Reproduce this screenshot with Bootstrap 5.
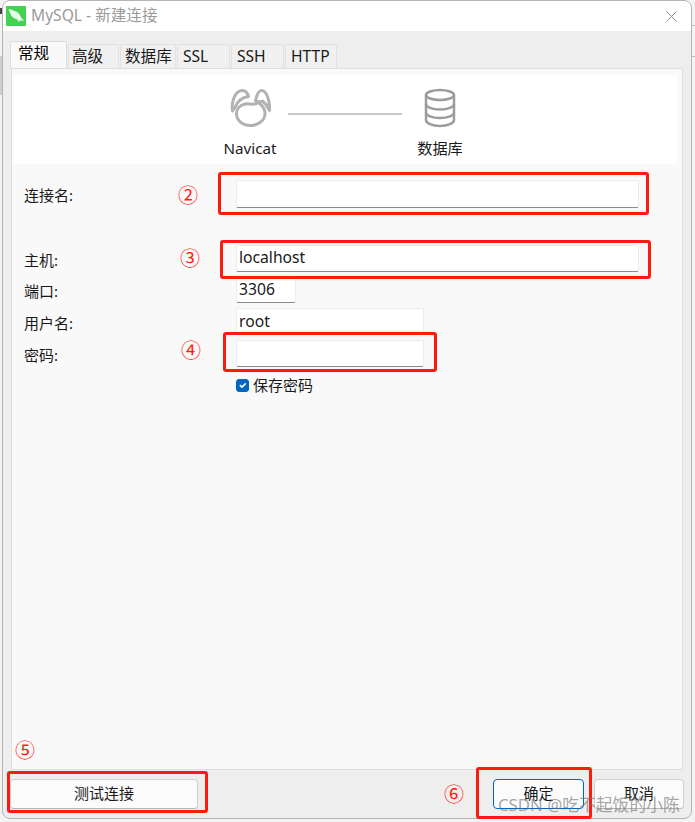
<!DOCTYPE html>
<html lang="zh-CN">
<head>
    <meta charset="UTF-8">
    <meta name="viewport" content="width=device-width, initial-scale=1.0">
    <title>MySQL - 新建连接</title>
    <link href="https://cdn.jsdelivr.net/npm/bootstrap@5.3.0/dist/css/bootstrap.min.css" rel="stylesheet">
    <script src="https://cdn.jsdelivr.net/npm/bootstrap@5.3.0/dist/js/bootstrap.bundle.min.js"></script>
    <style>
        html, body { height: 822px; overflow: hidden; }
        body {
            position: relative;
            background: #f3f3f3;
            font-family: "Noto Sans", "Noto Sans CJK SC", sans-serif;
            font-size: 15px;
            color: #1a1a1a;
        }
        .win {
            width: 690px;
            height: 819px;
            margin-left: 2px;
            background: #eeeeee;
            border: 1px solid #b4b4b4;
            border-radius: 8px;
            overflow: hidden;
            position: relative;
            z-index: 1;
        }
        .win-title {
            height: 30px;
            background: #fff;
            padding: 0 14px 0 3px;
            color: #9a9a9a;
            font-size: 15.6px;
        }
        .win-title svg.logo { margin-right: 5px; }
        .tab-strip { padding: 10px 8px 0 7px; }
        .tab-strip .nav-tabs { border: 0; height: 27px; gap: 1px; align-items: flex-end; }
        .tab-strip .nav-link {
            height: 25px;
            padding: 0 0 0 5px;
            display: flex;
            align-items: center;
            color: #1a1a1a;
            font-size: 15.6px;
            background: #f0f0f0;
            border: 1px solid #e2e2e2;
            border-bottom: 0;
            border-radius: 2px 2px 0 0;
            margin: 0;
        }
        .tab-strip .nav-link.active { height: 28px; background: #f9f9f9; border-color: #dcdcdc; padding-bottom: 3px; padding-left: 7px; }
        .tab-tight { padding-left: 3px !important; }
        .tab-db { padding-left: 4px !important; }
        .panel-main {
            margin: 0 8px 0 8px;
            height: 702px;
            background: #f9f9f9;
            border: 1px solid #dedede;
            padding: 6px 5px 0 1px;
        }
        .banner { height: 89px; background: #fff; margin-bottom: 16px; padding-top: 6px; }
        .step-item { width: 70px; }
        .step-item span { font-size: 15.200px; line-height: 20px; margin-top: 10px; }
        .step-line { width: 114px; height: 2px; background: #c8c8c8; margin: 0 3px; transform: translateY(-9px); }
        .field-row { height: 27px; margin-bottom: 5px; padding-left: 11px; }
        .field-row > label { width: 212px; flex: none; margin: 0; padding-top: 3px; }
        .field-row .form-control {
            height: 100%;
            border: 1px solid #ececec;
            border-bottom: 1px solid #8a8a8a;
            border-radius: 2px;
            padding: 0 2px 2px;
            font-size: 15.7px;
            color: #1a1a1a;
            background: #fff;
            box-shadow: none;
        }
        .row-host .form-control { padding-bottom: 4px; }
        .w-name { width: 403px; }
        .w-port { width: 60px; }
        .w-user { width: 188px; }
        .row-first { height: 28px; margin-bottom: 37px; }
        .row-first > label { padding-top: 2px; }
        .row-host { margin-bottom: 4px; }
        .save-row { padding-left: 223px; margin-top: 7px; font-size: 15px; }
        .save-row .form-check-input {
            width: 13px;
            height: 13px;
            margin: 0 4px 0 0;
            border-radius: 3px;
            background-color: #0067c0;
            border-color: #0067c0;
        }
        .win-foot { padding: 9px 7px 0 7px; }
        .foot-btn {
            height: 30px;
            padding: 0 0 2px;
            background: #fbfbfb;
            border: 1px solid #cfcfcf;
            border-bottom-color: #b5b5b5;
            border-radius: 4px;
            font-size: 15px;
            color: #1a1a1a;
        }
        .foot-test { width: 188px; }
        .foot-ok { width: 91px; margin-left: auto; margin-right: 10px; border: 1px solid #0067c0; }
        .foot-cancel { width: 90px; }
        .mark-box { position: absolute; z-index: 2; border: 3px solid #ff1a10; border-radius: 3px; pointer-events: none; }
        .mark-num { position: absolute; z-index: 2; color: #ff1a10; font-size: 20px; line-height: 20px; transform: translate(-50%, -50%); font-family: "Noto Sans CJK SC", sans-serif; }
        .wm-text {
            position: absolute;
            z-index: 2;
            left: 498px;
            top: 794px;
            font-size: 16.800px;
            line-height: 22px;
            color: rgba(110, 110, 110, .62);
            white-space: nowrap;
        }
        /* 窗口背后露出的部分 */
        .back-bit { position: absolute; left: 0; width: 2px; }
        .back-a { top: 8px; height: 6px; background: #444; }
        .back-b { top: 56px; height: 39px; background: #cfcfcf; }
        .back-line { position: absolute; left: 692px; width: 3px; height: 1px; background: #bdbdbd; }
    </style>
</head>
<body>
    <div class="back-bit back-a"></div>
    <div class="back-bit back-b"></div>
    <div class="back-line" style="top:25px"></div>
    <div class="back-line" style="top:56px"></div>

    <div class="win d-flex flex-column">
        <!-- 标题栏 -->
        <div class="win-title d-flex align-items-center flex-none">
            <svg class="logo" width="20" height="20" viewBox="0 0 20 20">
                <rect width="20" height="20" fill="#43d252"/>
                <path d="M2.500 3.500c2.500-.5 4 .5 5.500 1.500 3 .5 5 2 6 4.500 1 2 2.500 3.500 4 5.500-1.500-.5-2.500-.5-4-.5l-1.500 1.500-1-2.500C8.500 13 5.500 11 4.500 8 4 6.500 3 5 2.500 3.500z" fill="#e9fbe9"/>
            </svg>
            <span>MySQL - 新建连接</span>
            <svg class="ms-auto" width="11" height="11" viewBox="0 0 11 11" stroke="#8c8c8c" stroke-width="1">
                <path d="M.5.5l10 10M10.500.5l-10 10"/>
            </svg>
        </div>

        <!-- 标签页 -->
        <div class="tab-strip">
            <ul class="nav nav-tabs">
                <li class="nav-item"><a class="nav-link active" style="width:57px" href="#">常规</a></li>
                <li class="nav-item"><a class="nav-link tab-tight" style="width:51px" href="#">高级</a></li>
                <li class="nav-item"><a class="nav-link tab-db" style="width:56px" href="#">数据库</a></li>
                <li class="nav-item"><a class="nav-link" style="width:53px" href="#">SSL</a></li>
                <li class="nav-item"><a class="nav-link" style="width:53px" href="#">SSH</a></li>
                <li class="nav-item"><a class="nav-link" style="width:52px" href="#">HTTP</a></li>
            </ul>
        </div>

        <div class="panel-main">
            <div class="banner d-flex justify-content-center align-items-center">
                <div class="step-item d-flex flex-column align-items-center">
                    <svg width="42" height="40" viewBox="0 0 42 40" fill="none" stroke="#b2b2b2" stroke-width="3" stroke-linecap="round" stroke-linejoin="round">
                        <path d="M3.500 23C2 12 7 2.500 13.500 2.500c3 0 5 2.500 6 6-6 1-11 5-13 10z"/>
                        <path d="M26.500 13c1-5 3-10.500 6-10.500 5 0 8.500 10 8 20-1.500-3.500-4-7-7-9.500-2 1-4 1-7 0z"/>
                        <path d="M7.500 25c-.5 7 6 12.500 13.500 12.500S36 33 36 25.500c0-4-3-8.500-7-11-2.500 2-5 2-8 1.500-6-1-13 2-13.500 9z"/>
                    </svg>
                    <span>Navicat</span>
                </div>
                <div class="step-line"></div>
                <div class="step-item d-flex flex-column align-items-center">
                    <svg width="32" height="40" viewBox="0 0 32 40" fill="none" stroke="#9c9c9c" stroke-width="2.500">
                        <ellipse cx="16" cy="7" rx="14" ry="5"/>
                        <path d="M2 7v25c0 3 6 6 14 6s14-3 14-6V7"/>
                        <path d="M2 16c0 3 6 5.500 14 5.500S30 19 30 16"/>
                        <path d="M2 24.500c0 3 6 5.500 14 5.500s14-2.500 14-5.500"/>
                    </svg>
                    <span>数据库</span>
                </div>
            </div>

            <div class="field-row row-first d-flex align-items-center">
                <label for="connName">连接名:</label>
                <input id="connName" class="form-control w-name" type="text">
            </div>
            <div class="field-row row-host d-flex align-items-center">
                <label for="hostName">主机:</label>
                <input id="hostName" class="form-control w-name" type="text" value="localhost">
            </div>
            <div class="field-row d-flex align-items-center">
                <label for="portNo">端口:</label>
                <input id="portNo" class="form-control w-port" type="text" value="3306">
            </div>
            <div class="field-row d-flex align-items-center">
                <label for="userName">用户名:</label>
                <input id="userName" class="form-control w-user" type="text" value="root">
            </div>
            <div class="field-row d-flex align-items-center">
                <label for="passWord">密码:</label>
                <input id="passWord" class="form-control w-user" type="text">
            </div>
            <div class="save-row d-flex align-items-center">
                <input id="savePwd" class="form-check-input" type="checkbox" checked>
                <label for="savePwd">保存密码</label>
            </div>
        </div>

        <div class="win-foot d-flex">
            <button class="btn foot-btn foot-test" type="button">测试连接</button>
            <button class="btn foot-btn foot-ok" type="button">确定</button>
            <button class="btn foot-btn foot-cancel" type="button">取消</button>
        </div>
    </div>

    <!-- 红色标注 -->
    <div class="mark-box" style="left:218px;top:172px;width:431px;height:43px"></div>
    <div class="mark-box" style="left:220px;top:240px;width:431px;height:39px"></div>
    <div class="mark-box" style="left:223px;top:332px;width:214px;height:40px"></div>
    <div class="mark-box" style="left:7px;top:771px;width:201px;height:42px"></div>
    <div class="mark-box" style="left:476px;top:767px;width:116px;height:52px"></div>
    <span class="mark-num" style="left:188px;top:195px">②</span>
    <span class="mark-num" style="left:190px;top:258px">③</span>
    <span class="mark-num" style="left:191px;top:350px">④</span>
    <span class="mark-num" style="left:25px;top:750px">⑤</span>
    <span class="mark-num" style="left:454px;top:794px">⑥</span>
    <span class="wm-text">CSDN @吃不起饭的小陈</span>
</body>
</html>
